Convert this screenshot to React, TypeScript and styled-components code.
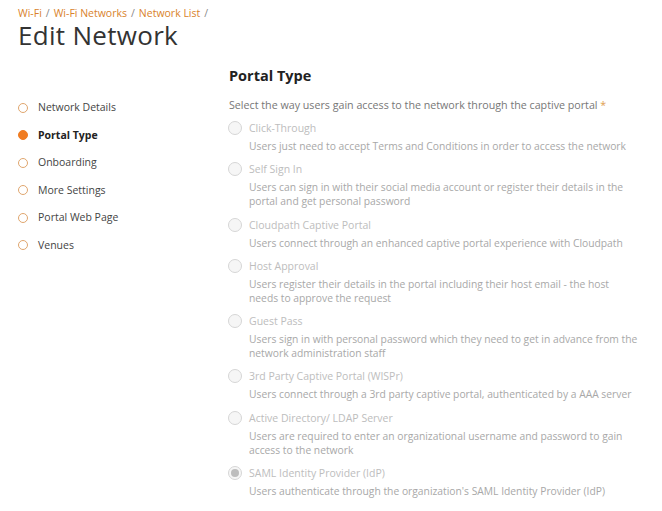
import React from "react";
import styled, { createGlobalStyle } from "styled-components";

const Global = createGlobalStyle`
  html, body { margin: 0; padding: 0; background: #fff; }
  body { font-family: "Open Sans", "Liberation Sans", sans-serif; color: #333; }
`;

const Page = styled.div`
  padding: 6px 0 0 18px;
  width: 662px;
  box-sizing: border-box;
`;

const Crumbs = styled.div`
  font-family: "Open Sans", sans-serif;
  font-size: 10.5px;
  line-height: 14px;
  color: #888;
  display: flex;
  gap: 4px;
`;

const Crumb = styled.span`
  color: #d9822b;
`;

const Title = styled.h1`
  margin: 2px 0 0 0;
  font-family: "Open Sans", sans-serif;
  font-weight: 400;
  font-size: 26px;
  line-height: 27px;
  color: #333;
  letter-spacing: 0.3px;
`;

const Body = styled.div`
  display: grid;
  grid-template-columns: 211px 1fr;
  margin-top: 18px;
`;

const Nav = styled.ul`
  list-style: none;
  margin: 0;
  padding: 33px 0 0 0;
  display: flex;
  flex-direction: column;
  gap: 12.6px;
`;

const NavItem = styled.li<{ $active?: boolean }>`
  display: flex;
  align-items: center;
  gap: 10px;
  font-size: 10.5px;
  line-height: 15px;
  color: ${(p) => (p.$active ? "#222" : "#444")};
  font-weight: ${(p) => (p.$active ? 700 : 400)};
`;

const NavDot = styled.span<{ $active?: boolean }>`
  width: 10px;
  height: 10px;
  border-radius: 50%;
  box-sizing: border-box;
  border: 1px solid ${(p) => (p.$active ? "#f07c22" : "#e0a66e")};
  background: ${(p) => (p.$active ? "#f07c22" : "#fff")};
`;

const Main = styled.div`
  display: flex;
  flex-direction: column;
`;

const Heading = styled.h2`
  margin: 0;
  font-size: 14.5px;
  line-height: 18px;
  font-weight: 700;
  color: #222;
`;

const Prompt = styled.div`
  margin-top: 13px;
  font-size: 10.7px;
  line-height: 14px;
  color: #777;
`;

const Star = styled.span`
  color: #e0a050;
`;

const Options = styled.div`
  display: flex;
  flex-direction: column;
  gap: 9.25px;
  margin-top: 9px;
`;

const Option = styled.div`
  display: grid;
  grid-template-columns: 20px 1fr;
  row-gap: 4px;
`;

const Radio = styled.span<{ $checked?: boolean }>`
  width: 14px;
  height: 14px;
  margin-left: -1px;
  border-radius: 50%;
  box-sizing: border-box;
  border: 1px solid #d6d6d6;
  background: #f6f6f6;
  display: flex;
  align-items: center;
  justify-content: center;
  &::after {
    content: "";
    display: ${(p) => (p.$checked ? "block" : "none")};
    width: 8px;
    height: 8px;
    border-radius: 50%;
    background: #bdbdbd;
  }
`;

const Label = styled.div`
  font-size: 10.5px;
  line-height: 14px;
  color: #bdbdbd;
`;

const Desc = styled.div`
  grid-column: 2;
  font-size: 10.3px;
  line-height: 14px;
  color: #a8a8a8;
  max-width: 390px;
`;

const navItems = [
  "Network Details",
  "Portal Type",
  "Onboarding",
  "More Settings",
  "Portal Web Page",
  "Venues",
];

const options = [
  ["Click-Through", "Users just need to accept Terms and Conditions in order to access the network"],
  ["Self Sign In", "Users can sign in with their social media account or register their details in the portal and get personal password"],
  ["Cloudpath Captive Portal", "Users connect through an enhanced captive portal experience with Cloudpath"],
  ["Host Approval", "Users register their details in the portal including their host email - the host needs to approve the request"],
  ["Guest Pass", "Users sign in with personal password which they need to get in advance from the network administration staff"],
  ["3rd Party Captive Portal (WISPr)", "Users connect through a 3rd party captive portal, authenticated by a AAA server"],
  ["Active Directory/ LDAP Server", "Users are required to enter an organizational username and password to gain access to the network"],
  ["SAML Identity Provider (IdP)", "Users authenticate through the organization's SAML Identity Provider (IdP)"],
];

export default function App() {
  return (
    <Page>
      <Global />
      <Crumbs>
        <Crumb>Wi-Fi</Crumb>/<Crumb>Wi-Fi Networks</Crumb>/<Crumb>Network List</Crumb>/
      </Crumbs>
      <Title>Edit Network</Title>
      <Body>
        <Nav>
          {navItems.map((n) => (
            <NavItem key={n} $active={n === "Portal Type"}>
              <NavDot $active={n === "Portal Type"} />
              {n}
            </NavItem>
          ))}
        </Nav>
        <Main>
          <Heading>Portal Type</Heading>
          <Prompt>
            Select the way users gain access to the network through the captive portal <Star>*</Star>
          </Prompt>
          <Options>
            {options.map(([l, d], i) => (
              <Option key={l}>
                <Radio $checked={i === options.length - 1} />
                <Label>{l}</Label>
                <Desc>{d}</Desc>
              </Option>
            ))}
          </Options>
        </Main>
      </Body>
    </Page>
  );
}
